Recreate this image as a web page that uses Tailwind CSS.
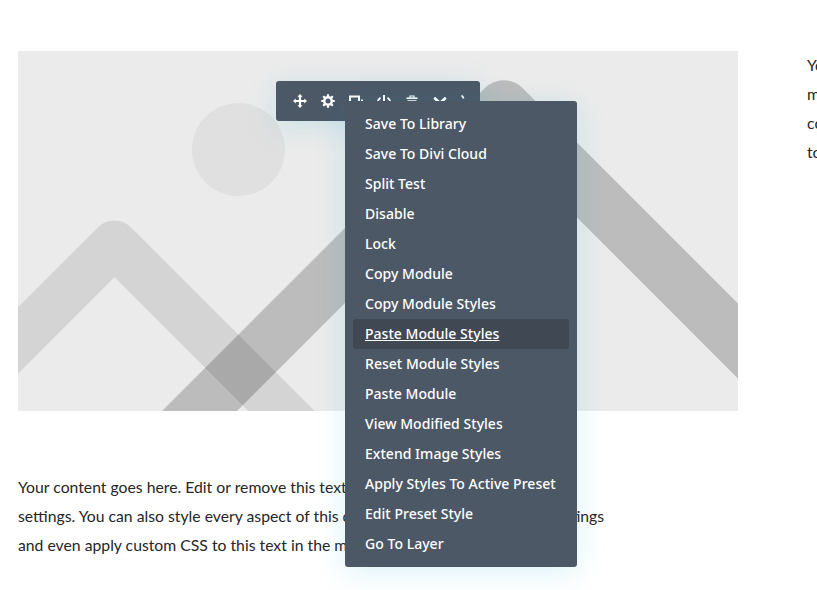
<!DOCTYPE html>
<html lang="en">
<head>
    <meta charset="UTF-8">
    <meta name="viewport" content="width=device-width, initial-scale=1.0">
    <title>Image module menu</title>
    <script src="https://cdn.jsdelivr.net/npm/@tailwindcss/browser@4"></script>
</head>
<body class="bg-white overflow-hidden">

    <div class="relative h-[590px] w-[817px] overflow-hidden pl-[18px] pt-[50px] font-['Lato',sans-serif] text-[15.75px] leading-[29px] text-[#262626]">
        <div class="flex gap-[69px] w-[1300px]">

            <!-- Left column -->
            <div class="w-[720px] shrink-0 pt-px">
                <svg class="block w-[720px] h-[360px] bg-[#ebebeb]" viewBox="18 51 720 360" fill="none">
                    <circle cx="238.5" cy="149.5" r="46.5" fill="#e0e0e0"/>
                    <polyline points="-80,438.5 114.5,244 340,469.5" stroke="#000" stroke-opacity="0.098" stroke-width="47" stroke-linejoin="round"/>
                    <polyline points="110,500.5 503.75,106.75 800,403" stroke="#000" stroke-opacity="0.2" stroke-width="53" stroke-linejoin="round"/>
                </svg>
                <p class="mt-[61px] w-[600px]">Your content goes here. Edit or remove this text inline or in the module Content settings. You can also style every aspect of this content in the module Design settings and even apply custom CSS to this text in the module Advanced settings.</p>
            </div>

            <!-- Right column -->
            <div class="w-[456px] shrink-0">
                <p>Your content goes here. Edit or remove this text inline or in the module Content settings. You can also style every aspect of this content in the module Design settings and even apply custom CSS to this text in the module Advanced settings.</p>
            </div>
        </div>

        <!-- Module toolbar -->
        <div class="absolute left-[276px] top-[81px] flex h-10 w-[204px] items-center rounded-[3px] bg-[#4c5866] pl-[16px] text-white shadow-[0_5px_30px_rgba(0,170,210,0.15)]">
            <div class="flex items-center gap-[12px]">
                <!-- move -->
                <svg class="h-4 w-4" viewBox="0 0 16 16" fill="currentColor">
                    <path d="M8 1 10.6 3.8H9.1V6.9H12.2V5.4L15 8 12.2 10.6V9.1H9.1V12.2H10.6L8 15 5.4 12.2H6.9V9.1H3.8V10.6L1 8 3.8 5.4V6.9H6.9V3.8H5.4Z"/>
                </svg>
                <!-- settings -->
                <svg class="h-4 w-4" viewBox="0 0 16 16" fill="none" stroke="currentColor">
                    <circle cx="8" cy="8" r="3.8" stroke-width="2.6"/>
                    <path d="M8 1.2V3.4M8 12.6V14.8M1.2 8H3.4M12.6 8H14.8M3.2 3.2 4.8 4.8M11.2 11.2 12.8 12.8M12.8 3.2 11.2 4.8M4.8 11.2 3.2 12.8" stroke-width="2.2"/>
                </svg>
                <!-- duplicate -->
                <svg class="h-4 w-4" viewBox="0 0 16 16" fill="none" stroke="currentColor" stroke-width="2">
                    <path d="M2 14V3.5H11V14"/>
                    <path d="M14 6.5V8.5"/>
                </svg>
                <!-- disable -->
                <svg class="h-4 w-4" viewBox="0 0 16 16" fill="none" stroke="currentColor" stroke-width="1.6">
                    <path d="M8 2V10" stroke-width="2"/>
                    <path d="M4.6 4.8C2.6 6 1.6 7.8 1.6 9.9M11.4 4.8C13.4 6 14.4 7.8 14.4 9.9"/>
                </svg>
                <!-- delete -->
                <svg class="h-4 w-4" viewBox="0 0 16 16" fill="none" stroke="currentColor" stroke-width="1.6">
                    <path d="M2.5 5.2H13.5"/>
                    <path d="M6 4.4V3H10V4.4" stroke-width="1.2"/>
                    <path d="M3.5 8H12.5"/>
                </svg>
                <!-- expand -->
                <svg class="h-4 w-4" viewBox="0 0 16 16" fill="none" stroke="currentColor" stroke-width="2.6">
                    <path d="M2.2 4.8 8 10 13.8 4.8"/>
                </svg>
            </div>
            <!-- more -->
            <svg class="ml-[11px] h-4 w-[10px]" viewBox="0 0 10 16" fill="none" stroke="currentColor" stroke-width="1.6">
                <path d="M2.5 2.5C3.6 3.2 4.3 4 4.6 5.5"/>
            </svg>
        </div>

        <!-- Context menu -->
        <ul class="absolute left-[345px] top-[101px] w-[232px] whitespace-nowrap rounded-[3px] bg-[#4c5866] p-2 font-['Noto_Sans',sans-serif] text-[14px] font-medium leading-[30px] tracking-[0.03px] text-white shadow-[0_5px_30px_rgba(0,170,210,0.15)]">
            <li class="px-3">Save To Library</li>
            <li class="px-3">Save To Divi Cloud</li>
            <li class="px-3">Split Test</li>
            <li class="px-3">Disable</li>
            <li class="px-3">Lock</li>
            <li class="px-3">Copy Module</li>
            <li class="px-3">Copy Module Styles</li>
            <li class="rounded-[3px] bg-[#3f4853] px-3 underline">Paste Module Styles</li>
            <li class="px-3">Reset Module Styles</li>
            <li class="px-3">Paste Module</li>
            <li class="px-3">View Modified Styles</li>
            <li class="px-3">Extend Image Styles</li>
            <li class="px-3">Apply Styles To Active Preset</li>
            <li class="px-3">Edit Preset Style</li>
            <li class="px-3">Go To Layer</li>
        </ul>
    </div>

</body>
</html>
